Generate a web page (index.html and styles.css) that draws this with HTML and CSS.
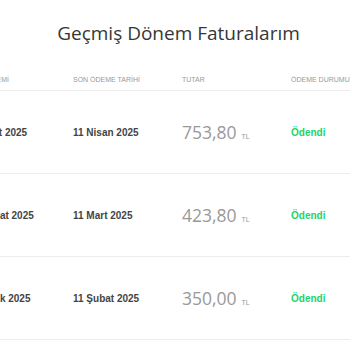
FILE: index.html
```html
<!DOCTYPE html>
<html lang="tr">
<head>
<meta charset="utf-8">
<link rel="stylesheet" href="styles.css">
</head>
<body>
<h1 class="title">Geçmiş Dönem Faturalarım</h1>
<div class="table">
  <div class="row head">
    <div class="cell">DÖNEMİ</div>
    <div class="cell">SON ÖDEME TARİHİ</div>
    <div class="cell">TUTAR</div>
    <div class="cell">ÖDEME DURUMU</div>
  </div>
  <div class="row">
    <div class="cell date">Mart 2025</div>
    <div class="cell date">11 Nisan 2025</div>
    <div class="cell amount">753,80<span class="cur">TL</span></div>
    <div class="cell status">Ödendi</div>
  </div>
  <div class="row">
    <div class="cell date">Şubat 2025</div>
    <div class="cell date">11 Mart 2025</div>
    <div class="cell amount">423,80<span class="cur">TL</span></div>
    <div class="cell status">Ödendi</div>
  </div>
  <div class="row">
    <div class="cell date">Ocak 2025</div>
    <div class="cell date">11 Şubat 2025</div>
    <div class="cell amount">350,00<span class="cur">TL</span></div>
    <div class="cell status">Ödendi</div>
  </div>
</div>
</body>
</html>
```
FILE: styles.css
```css
html, body {
  margin: 0;
  padding: 0;
  background: #fff;
  overflow: hidden;
}
body {
  font-family: "Liberation Sans", Arial, sans-serif;
  width: 350px;
}
.title {
  margin: 0;
  padding-top: 21px;
  padding-left: 7px;
  font-family: "Open Sans", sans-serif;
  font-weight: 400;
  font-size: 19px;
  line-height: 24px;
  color: #363636;
  text-align: center;
}
.table {
  margin-top: 23px;
  overflow: hidden;
}
.row {
  display: grid;
  grid-template-columns: 92px 109px 109px 109px;
  margin-left: -19px;
  border-bottom: 1px solid #ececec;
  height: 82px;
  align-items: center;
  white-space: nowrap;
}
.row.head {
  height: 22px;
}
.head .cell {
  font-size: 7px;
  color: #999;
}
.date {
  font-size: 10px;
  font-weight: 700;
  color: #444;
}
.amount {
  font-family: "Open Sans", sans-serif;
  font-size: 17.5px;
  color: #999;
}
.cur {
  font-family: "Liberation Sans", Arial, sans-serif;
  font-size: 7px;
  margin-left: 5px;
  color: #999;
}
.status {
  font-size: 10px;
  font-weight: 700;
  color: #22d36a;
}
```
